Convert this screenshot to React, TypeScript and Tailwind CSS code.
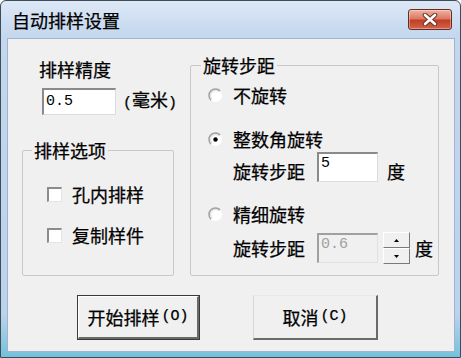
import React from "react";

function Radio({ checked }: { checked?: boolean }) {
  return (
    <svg width="15" height="15" viewBox="0 0 15 15" className="shrink-0">
      <circle cx="7.5" cy="7.5" r="6.5" fill="#ffffff" />
      <path d="M2.9 12.1 A6.5 6.5 0 0 1 12.1 2.9" fill="none" stroke="#a0a0a0" strokeWidth="1.5" />
      <path d="M3.9 11.1 A5.1 5.1 0 0 1 11.1 3.9" fill="none" stroke="#d8d8d8" strokeWidth="1" />
      {checked && <circle cx="7.5" cy="7.5" r="2.2" fill="#000000" />}
    </svg>
  );
}

function Check() {
  return (
    <div className="w-[15px] h-[15px] shrink-0 bg-white border-t-2 border-l-2 border-b border-r border-t-[#8c8c8c] border-l-[#8c8c8c] border-b-[#e4e4e4] border-r-[#e4e4e4]" />
  );
}

function Spinner() {
  return (
    <div className="ml-[5px] flex flex-col w-[27px] h-[32px]">
      <div className="h-[16px] bg-[#f0f0f0] border-t border-l border-t-white border-l-white border-b border-r border-b-[#7a7a7a] border-r-[#7a7a7a] flex items-center justify-center">
        <svg width="5" height="3" viewBox="0 0 5 3">
          <path d="M2.5 0 L5 3 L0 3 Z" fill="#000" />
        </svg>
      </div>
      <div className="h-[16px] bg-[#f0f0f0] border-t border-l border-t-white border-l-white border-b border-r border-b-[#7a7a7a] border-r-[#7a7a7a] flex items-center justify-center">
        <svg width="5" height="3" viewBox="0 0 5 3">
          <path d="M0 0 L5 0 L2.5 3 Z" fill="#000" />
        </svg>
      </div>
    </div>
  );
}

export default function App() {
  return (
    <div className="w-[461px] h-[358px] bg-white">
      <div className="w-[461px] h-[358px] flex flex-col rounded-t-[6px] border border-[#3e4c5a] bg-[linear-gradient(to_bottom,#dde8f6,#c3d7ee_10%,#bcd3ec_88%,#72c2dc)] font-['Noto_Sans_CJK_SC',sans-serif] text-[18px] leading-[20px] text-black [-webkit-text-stroke:0.25px_#000]">
        <div className="h-[37px] shrink-0 flex items-center justify-between pl-[11px] pr-[8px]">
          <span>自动排样设置</span>
          <div className="w-[44px] h-[21px] rounded-[3px] border border-[#6a2a20] bg-[linear-gradient(to_bottom,#eeb2a2,#dc7a64_45%,#c23e27_55%,#d4634a)] shadow-[inset_0_0_0_1px_rgba(255,255,255,0.35)] flex items-center justify-center">
            <svg width="16" height="13" viewBox="0 0 16 13">
              <path d="M3 2 L13 11 M13 2 L3 11" stroke="#6b2e24" strokeWidth="4.5" strokeLinecap="round" />
              <path d="M3 2 L13 11 M13 2 L3 11" stroke="#ffffff" strokeWidth="2.6" strokeLinecap="round" />
            </svg>
          </div>
        </div>
        <div className="ml-[6px] mr-[5px] mb-[5px] flex-1 border border-[#9fb5cf] bg-[#f0f0f0] flex flex-col">
          <div className="flex pl-[14px]">
            <div className="w-[152px] shrink-0 flex flex-col">
              <div className="mt-[20px] pl-[17px] whitespace-nowrap">排样精度</div>
              <div className="mt-[9px] flex items-center pl-[20px] whitespace-nowrap">
                <div className="w-[74px] h-[27px] shrink-0 bg-white border-t-2 border-l-2 border-b border-r border-t-[#8a8a8a] border-l-[#8a8a8a] border-b-[#dcdcdc] border-r-[#dcdcdc] flex items-center pl-[2px] font-['Liberation_Mono',monospace] text-[15px] [-webkit-text-stroke:0px]">
                  0.5
                </div>
                <span className="ml-[7px] shrink-0">
                  <span className="font-['Liberation_Mono',monospace] text-[15px]">(</span>毫米<span className="font-['Liberation_Mono',monospace] text-[15px]">)</span>
                </span>
              </div>
              <fieldset className="mt-[25px] h-[136px] border border-[#c8c8c8] rounded-[2px]">
                <legend className="ml-[9px] px-[2px] whitespace-nowrap">排样选项</legend>
                <div className="pl-[24px] pt-[24px] flex flex-col gap-[21px]">
                  <div className="h-[20px] flex items-center gap-[10px] whitespace-nowrap">
                    <Check />
                    <span>孔内排样</span>
                  </div>
                  <div className="h-[20px] flex items-center gap-[10px] whitespace-nowrap">
                    <Check />
                    <span>复制样件</span>
                  </div>
                </div>
              </fieldset>
            </div>
            <fieldset className="ml-[16px] mt-[16px] w-[249px] h-[221px] shrink-0 border border-[#c8c8c8] rounded-[2px]">
              <legend className="ml-[10px] px-[2px] whitespace-nowrap">旋转步距</legend>
              <div className="pl-[17px] pt-[10px] flex flex-col">
                <div className="h-[20px] flex items-center gap-[10px] whitespace-nowrap">
                  <Radio />
                  <span>不旋转</span>
                </div>
                <div className="mt-[24px] h-[20px] flex items-center gap-[10px] whitespace-nowrap">
                  <Radio checked />
                  <span>整数角旋转</span>
                </div>
                <div className="mt-[3px] h-[30px] flex items-center pl-[25px] whitespace-nowrap">
                  <span className="pt-[7px]">旋转步距</span>
                  <div className="ml-[12px] w-[61px] h-[30px] shrink-0 bg-white border-t-2 border-l-2 border-b border-r border-t-[#8a8a8a] border-l-[#8a8a8a] border-b-[#dcdcdc] border-r-[#dcdcdc] pl-[2px] pt-[1px] font-['Liberation_Mono',monospace] text-[15px] leading-[18px] [-webkit-text-stroke:0px]">
                    5
                  </div>
                  <span className="ml-[9px] pt-[7px]">度</span>
                </div>
                <div className="mt-[22px] h-[20px] flex items-center gap-[10px] whitespace-nowrap">
                  <Radio />
                  <span>精细旋转</span>
                </div>
                <div className="mt-[8px] h-[32px] flex items-center pl-[25px] whitespace-nowrap">
                  <span>旋转步距</span>
                  <div className="ml-[12px] w-[61px] h-[30px] shrink-0 bg-[#f0f0f0] border-t-2 border-l-2 border-b border-r border-t-[#a0a0a0] border-l-[#a0a0a0] border-b-[#e0e0e0] border-r-[#e0e0e0] pl-[2px] pt-[1px] font-['Liberation_Mono',monospace] text-[15px] leading-[18px] text-[#a0a0a0] [-webkit-text-stroke:0px]">
                    0.6
                  </div>
                  <Spinner />
                  <span className="ml-[5px]">度</span>
                </div>
              </div>
            </fieldset>
          </div>
          <div className="mt-[19px] flex pl-[69px] gap-[53px]">
            <div className="w-[123px] h-[45px] border border-[#3a3a3a]">
              <div className="w-full h-full bg-[#f0f0f0] border-t border-l border-t-white border-l-white border-b-2 border-r-2 border-b-[#6a6a6a] border-r-[#6a6a6a] flex items-center justify-center whitespace-nowrap">
                开始排样<span className="ml-[2px] font-['Liberation_Mono',monospace] text-[15px]">(O)</span>
              </div>
            </div>
            <div className="w-[125px] h-[45px] bg-[#f0f0f0] border-t border-l border-t-[#e8e8e8] border-l-[#d8d8d8] border-b-2 border-r-2 border-b-[#6a6a6a] border-r-[#6a6a6a] flex items-center justify-center whitespace-nowrap">
              取消<span className="ml-[2px] font-['Liberation_Mono',monospace] text-[15px]">(C)</span>
            </div>
          </div>
        </div>
      </div>
    </div>
  );
}
